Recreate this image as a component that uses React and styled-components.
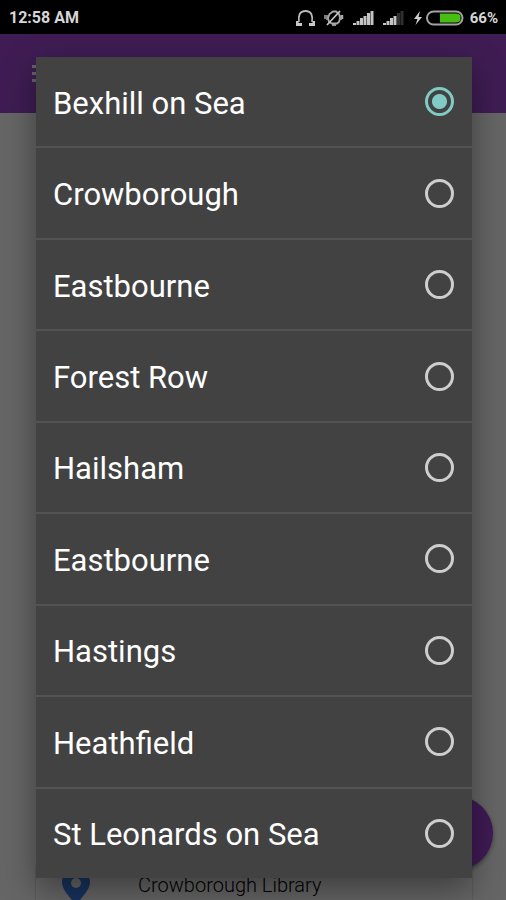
import React, { useState } from "react";
import styled, { createGlobalStyle } from "styled-components";

const GlobalStyle = createGlobalStyle`
  *, *::before, *::after { box-sizing: border-box; }
  body { margin: 0; background: #000; font-family: Roboto, "Liberation Sans", sans-serif; }
`;

const Screen = styled.div`
  position: relative;
  display: flex;
  flex-direction: column;
  height: 100vh;
  min-height: 640px;
  overflow: hidden;
`;

const StatusBar = styled.header`
  display: flex;
  flex: none;
  align-items: center;
  justify-content: space-between;
  height: 34px;
  padding: 2px 8px 0 9px;
  background: #000;
  color: #d6d6d6;
  font-size: 16px;
  font-weight: 700;
  line-height: 20px;
`;

const StatusIcons = styled.div`
  display: flex;
  align-items: center;
  svg { display: block; flex: none; }
`;

const IconGroup = styled.span`
  margin-right: ${(p) => p.$gap}px;
`;

const Percent = styled.span`
  margin-left: 6px;
  font-size: 15px;
`;

const AppArea = styled.div`
  position: relative;
  display: flex;
  flex: 1;
  flex-direction: column;
  min-height: 0;
`;

const AppBar = styled.div`
  display: flex;
  flex: none;
  align-items: center;
  height: 79px;
  padding-left: 32px;
  background: #9f4ad3;
  box-shadow: 0 1px 3px rgba(0, 0, 0, 0.4);
`;

const MenuButton = styled.button`
  display: flex;
  padding: 0;
  border: 0;
  background: none;
`;

const Content = styled.main`
  position: relative;
  display: flex;
  flex: 1;
  flex-direction: column;
  justify-content: flex-end;
  min-height: 0;
  padding: 0 34px 0 36px;
  background: #fff;
`;

const LibraryCard = styled.article`
  display: flex;
  align-items: flex-start;
  gap: 48px;
  height: 34px;
  padding-left: 26px;
  background: #fff;
  box-shadow: 0 0 2px rgba(0, 0, 0, 0.3);
  color: #000;
  font-size: 20px;
  font-weight: 300;
  line-height: 38px;
  svg { display: block; flex: none; }
`;

const AddButton = styled.button`
  position: absolute;
  right: 13px;
  bottom: 30px;
  width: 74px;
  height: 74px;
  padding: 0;
  border: 0;
  border-radius: 50%;
  background: #a045d8;
  box-shadow: 0 2px 4px rgba(0, 0, 0, 0.4);
`;

const Scrim = styled.div`
  position: absolute;
  inset: 0;
  display: flex;
  padding: 23px 34px 22px 36px;
  background: rgba(0, 0, 0, 0.6);
`;

const Dialog = styled.fieldset`
  display: flex;
  flex: 1;
  flex-direction: column;
  min-width: 0;
  margin: 0;
  padding: 0;
  border: 0;
  background: #424242;
  box-shadow: 0 12px 32px rgba(0, 0, 0, 0.4);
`;

const Option = styled.label`
  display: flex;
  flex: 1;
  align-items: center;
  justify-content: space-between;
  padding: 0 18px 0 17px;
  color: #fff;
  font-size: 31px;
  line-height: 36px;
  & + & { border-top: 2px solid #535353; }
`;

const TownName = styled.span`
  padding-top: 4px;
`;

const Radio = styled.input.attrs({ type: "radio" })`
  appearance: none;
  flex: none;
  width: 29px;
  height: 29px;
  margin: 0;
  border: 3px solid #cecece;
  border-radius: 50%;
  &:checked {
    border-color: #80cbc4;
    background: radial-gradient(circle, #80cbc4 7px, transparent 8px);
  }
`;

const towns = [
  "Bexhill on Sea",
  "Crowborough",
  "Eastbourne",
  "Forest Row",
  "Hailsham",
  "Eastbourne",
  "Hastings",
  "Heathfield",
  "St Leonards on Sea",
];

function HeadsetIcon() {
  return (
    <svg width="20" height="18" viewBox="0 0 20 18" fill="none" stroke="#b8b8b8" strokeWidth="1.8">
      <path d="M3 13c-1-6 .5-11 6.500-11S17 7 16 13" />
      <path d="M0 12h2.500v2H6v3H0zM19 12h-2.500v2H13v3h6z" fill="#c8c8c8" stroke="none" />
    </svg>
  );
}

function SilentIcon() {
  return (
    <svg width="20" height="18" viewBox="0 0 20 18" fill="none" stroke="#a8a8a8" strokeWidth="1.8">
      <path d="M5 13 4 9l1.500-4L9 2.500h3L15 5l1 4-1 4-2 1.500H8z" />
      <path d="M1 6v4M18.500 6v4M3 6v5M17 6v5" strokeWidth="1.500" />
      <path d="M3 16 16 2" stroke="#c4c4c4" />
      <path d="M8 16h4" />
    </svg>
  );
}

function SignalIcon({ level }) {
  return (
    <svg width="22" height="16" viewBox="0 0 22 16">
      {[2, 4, 7, 9, 12, 14].map((h, i) => (
        <rect key={i} x={i * 3.5} y={15 - h} width="3" height={h} fill={i < level ? "#c4c4c4" : "#303030"} />
      ))}
    </svg>
  );
}

function BatteryIcon() {
  return (
    <svg width="50" height="16" viewBox="0 0 50 16">
      <path d="M6 1 0 9h3.500L1.500 15 8 7H4.500z" fill="#d0d0d0" />
      <rect x="13" y="1.500" width="35.500" height="13" rx="6.500" fill="#000" stroke="#a3a3a3" strokeWidth="2" />
      <path d="M26 3.500h16q3 0 4.500 2v5q-1.500 2-4.500 2H26z" fill="#48bd12" />
    </svg>
  );
}

export default function App() {
  const [selected, setSelected] = useState(0);
  return (
    <>
      <GlobalStyle />
      <Screen>
        <StatusBar>
          <span>12:58 AM</span>
          <StatusIcons>
            <IconGroup $gap={8}><HeadsetIcon /></IconGroup>
            <IconGroup $gap={9}><SilentIcon /></IconGroup>
            <IconGroup $gap={8}><SignalIcon level={6} /></IconGroup>
            <IconGroup $gap={9}><SignalIcon level={4} /></IconGroup>
            <BatteryIcon />
            <Percent>66%</Percent>
          </StatusIcons>
        </StatusBar>
        <AppArea>
          <AppBar>
            <MenuButton aria-label="Menu">
              <svg width="28" height="18" viewBox="0 0 28 18" fill="#fff">
                <path d="M0 0h28v3H0zM0 7h28v3H0zM0 14h28v3H0z" />
              </svg>
            </MenuButton>
          </AppBar>
          <Content>
            <LibraryCard>
              <svg width="28" height="40" viewBox="0 0 28 40">
                <path d="M14 2C6 2 0 8 0 16c0 9 9 15 14 24 5-9 14-15 14-24C28 8 22 2 14 2z" fill="#3d7ff0" />
                <circle cx="14" cy="17" r="5" fill="#fff" />
              </svg>
              <span>Crowborough Library</span>
            </LibraryCard>
            <AddButton aria-label="Add" />
          </Content>
          <Scrim>
            <Dialog role="radiogroup" aria-label="Town">
              {towns.map((town, i) => (
                <Option key={i}>
                  <TownName>{town}</TownName>
                  <Radio name="town" checked={selected === i} onChange={() => setSelected(i)} />
                </Option>
              ))}
            </Dialog>
          </Scrim>
        </AppArea>
      </Screen>
    </>
  );
}
